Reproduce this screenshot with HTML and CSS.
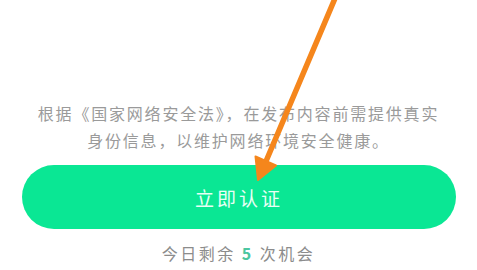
FILE: index.html
```html
<!DOCTYPE html>
<html lang="zh">
<head>
<meta charset="utf-8">
<link rel="stylesheet" href="styles.css">
</head>
<body>
<div class="page">
  <p class="notice">根据《国家网络安全法》，在发布内容前需提供真实<br>身份信息，以维护网络环境安全健康。</p>
  <div class="btn">立即认证</div>
  <p class="remain">今日剩余 <span class="num">5</span> 次机会</p>
  <svg class="arrow" width="477" height="270" viewBox="0 0 477 270">
    <line x1="336" y1="-4" x2="264" y2="166" stroke="#f5861c" stroke-width="5.5" stroke-linecap="round"/>
    <polygon points="258,180 255.5,156.5 276,165.5" fill="#f5861c" stroke="#f5861c" stroke-width="2" stroke-linejoin="round"/>
  </svg>
</div>
</body>
</html>
```
FILE: styles.css
```css
html, body {
  margin: 0;
  padding: 0;
  background: #ffffff;
}
.page {
  position: relative;
  width: 477px;
  height: 270px;
  overflow: hidden;
  display: flex;
  flex-direction: column;
  align-items: stretch;
  padding-top: 100px;
  box-sizing: border-box;
  font-family: "Noto Sans CJK SC", "Noto Sans", sans-serif;
}
.notice {
  margin: 0;
  text-align: center;
  font-size: 16px;
  line-height: 27px;
  letter-spacing: 1.8px;
  color: #9a9a9a;
  white-space: nowrap;
}
.btn {
  margin: 11px 21px 0 22px;
  height: 64px;
  border-radius: 32px;
  background: #0ae794;
  color: #e8fff4;
  display: flex;
  align-items: center;
  justify-content: center;
  font-size: 19px;
  letter-spacing: 3px;
}
.remain {
  margin: 12px 0 0;
  text-align: center;
  font-size: 16px;
  line-height: 24px;
  letter-spacing: 2.5px;
  color: #8c8c8c;
}
.num {
  color: #4cc6a0;
  font-weight: bold;
}
.arrow {
  position: absolute;
  left: 0;
  top: 0;
}
```
